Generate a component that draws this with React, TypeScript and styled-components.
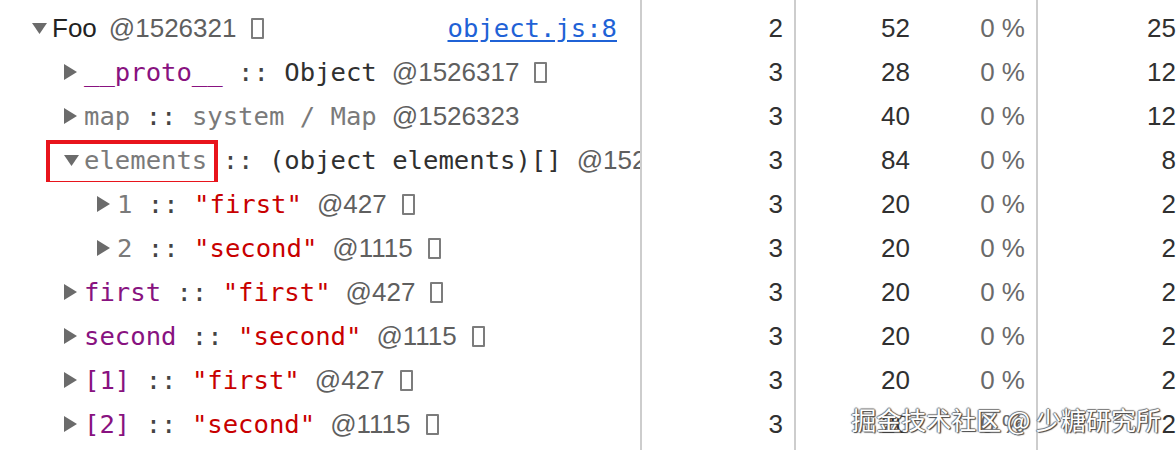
import React from "react";
import styled, { createGlobalStyle } from "styled-components";

const Global = createGlobalStyle`
  html, body { margin: 0; padding: 0; background: #fff; }
  body { width: 1176px; height: 450px; overflow: hidden; }
`;

const Page = styled.div`
  position: relative;
  width: 1176px;
  height: 450px;
  overflow: hidden;
  background: #fff;
`;

const Table = styled.div`
  display: flex;
  flex-direction: column;
  height: 100%;
`;

const Row = styled.div<{ $h?: number; $grow?: boolean }>`
  display: grid;
  grid-template-columns: 640px 154px 242px 140px;
  height: ${(p) => (p.$h !== undefined ? `${p.$h}px` : "44px")};
  flex: ${(p) => (p.$grow ? "1 1 auto" : "none")};
`;

const Cell = styled.div<{ $line?: boolean }>`
  display: flex;
  align-items: center;
  justify-content: flex-end;
  border-left: ${(p) => (p.$line ? "2px solid #cdcdcd" : "none")};
  font-family: "Liberation Sans", Arial, sans-serif;
  font-size: 26px;
  color: #303030;
  overflow: hidden;
  white-space: nowrap;
  box-sizing: border-box;
`;

const NumCell = styled(Cell)`
  padding-right: 11px;
`;

const LastCell = styled(Cell)`
  padding-right: 0;
`;

const TreeCell = styled.div<{ $level: number }>`
  display: flex;
  align-items: center;
  padding-left: ${(p) => (p.$level === 0 ? 32 : 31 + p.$level * 33)}px;
  overflow: hidden;
  white-space: pre;
  font-family: "DejaVu Sans Mono", Menlo, monospace;
  font-size: 25.6px;
  color: #303030;
`;

const Toggle = styled.span`
  display: inline-flex;
  align-items: center;
  flex: none;
  width: 20px;
`;

const Highlight = styled.span`
  position: relative;
  display: inline-flex;
  align-items: center;
  align-self: stretch;
  &::after {
    content: "";
    position: absolute;
    left: -18px;
    right: -11px;
    top: 2px;
    bottom: -3px;
    border: 4px solid #e8141c;
    pointer-events: none;
  }
`;

type Kind = "prop" | "meta" | "text" | "str" | "cls" | "sep";

const colors: Record<Kind, string> = {
  prop: "#881280",
  meta: "#7a7a7a",
  text: "#303030",
  str: "#c80000",
  cls: "#222222",
  sep: "#444444",
};

const Tok = styled.span<{ $k: Kind }>`
  color: ${(p) => colors[p.$k]};
  font-family: ${(p) =>
    p.$k === "cls"
      ? `"Liberation Sans", Arial, sans-serif`
      : `"DejaVu Sans Mono", Menlo, monospace`};
  font-size: ${(p) => (p.$k === "cls" ? "26px" : "inherit")};
`;

const Id = styled.span<{ $gap?: number }>`
  margin-left: ${(p) => (p.$gap !== undefined ? p.$gap : 15)}px;
  font-family: "Liberation Sans", Arial, sans-serif;
  font-size: 26px;
  color: #5f5f5f;
`;

const Tofu = styled.span`
  display: inline-block;
  flex: none;
  margin-left: 15px;
  width: 13px;
  height: 21px;
  box-sizing: border-box;
  border: 2px solid #7c7c7c;
  border-radius: 1px;
`;

const Link = styled.a`
  margin-left: auto;
  padding-right: 23px;
  color: #1f62d6;
  text-decoration: underline;
  text-underline-offset: 3px;
  font-family: "DejaVu Sans Mono", Menlo, monospace;
  cursor: pointer;
`;

const Size = styled.span`
  color: #303030;
`;

const Pct = styled.span`
  min-width: 115px;
  text-align: right;
  color: #6a6a6a;
`;

const Watermark = styled.div`
  position: absolute;
  right: 15px;
  bottom: 13px;
  font-family: "Noto Sans CJK SC", "Liberation Sans", sans-serif;
  font-size: 25px;
  color: #ffffff;
  white-space: pre;
  text-shadow: 1px 1px 1px #444, -1px 0 1px #777, 0 -1px 1px #777, 1px 0 1px #555;
`;

const Arrow: React.FC<{ open?: boolean }> = ({ open }) =>
  open ? (
    <svg width="15" height="11" viewBox="0 0 15 11">
      <polygon points="0,0 15,0 7.5,11" fill="#6b6b6b" />
    </svg>
  ) : (
    <svg width="13" height="16" viewBox="0 0 13 16">
      <polygon points="0,0 13,8 0,16" fill="#6b6b6b" />
    </svg>
  );

type Seg = [Kind, string];

interface RowData {
  level: number;
  open?: boolean;
  name: Seg;
  rest: Seg[];
  id: string;
  idGap?: number;
  tofu?: boolean;
  boxed?: boolean;
  link?: string;
  dist: string;
  size: string;
  ret: string;
}

const SEP: Seg = ["sep", " :: "];

const rows: RowData[] = [
  { level: 0, open: true, name: ["cls", "Foo"], rest: [], id: "@1526321", idGap: 12, tofu: true, link: "object.js:8", dist: "2", size: "52", ret: "25" },
  { level: 1, name: ["prop", "__proto__"], rest: [SEP, ["text", "Object"]], id: "@1526317", tofu: true, dist: "3", size: "28", ret: "12" },
  { level: 1, name: ["meta", "map"], rest: [SEP, ["meta", "system / Map"]], id: "@1526323", dist: "3", size: "40", ret: "12" },
  { level: 1, open: true, boxed: true, name: ["meta", "elements"], rest: [SEP, ["text", "(object elements)[]"]], id: "@1526325", dist: "3", size: "84", ret: "8" },
  { level: 2, name: ["meta", "1"], rest: [SEP, ["str", "\"first\""]], id: "@427", tofu: true, dist: "3", size: "20", ret: "2" },
  { level: 2, name: ["meta", "2"], rest: [SEP, ["str", "\"second\""]], id: "@1115", tofu: true, dist: "3", size: "20", ret: "2" },
  { level: 1, name: ["prop", "first"], rest: [SEP, ["str", "\"first\""]], id: "@427", tofu: true, dist: "3", size: "20", ret: "2" },
  { level: 1, name: ["prop", "second"], rest: [SEP, ["str", "\"second\""]], id: "@1115", tofu: true, dist: "3", size: "20", ret: "2" },
  { level: 1, name: ["prop", "[1]"], rest: [SEP, ["str", "\"first\""]], id: "@427", tofu: true, dist: "3", size: "20", ret: "2" },
  { level: 1, name: ["prop", "[2]"], rest: [SEP, ["str", "\"second\""]], id: "@1115", tofu: true, dist: "3", size: "20", ret: "2" },
];

const EmptyRow: React.FC<{ h?: number; grow?: boolean }> = ({ h, grow }) => (
  <Row $h={h} $grow={grow}>
    <Cell />
    <Cell $line />
    <Cell $line />
    <Cell $line />
  </Row>
);

export default function App() {
  return (
    <Page>
      <Global />
      <Table>
        <EmptyRow h={6} />
        {rows.map((r, i) => {
          const head = (
            <>
              <Toggle>
                <Arrow open={r.open} />
              </Toggle>
              <Tok $k={r.name[0]}>{r.name[1]}</Tok>
            </>
          );
          return (
            <Row key={i}>
              <TreeCell $level={r.level}>
                {r.boxed ? <Highlight>{head}</Highlight> : head}
                {r.rest.map((s, j) => (
                  <Tok key={j} $k={s[0]}>
                    {s[1]}
                  </Tok>
                ))}
                <Id $gap={r.idGap}>{r.id}</Id>
                {r.tofu && <Tofu />}
                {r.link && <Link>{r.link}</Link>}
              </TreeCell>
              <NumCell $line>{r.dist}</NumCell>
              <NumCell $line>
                <Size>{r.size}</Size>
                <Pct>0 %</Pct>
              </NumCell>
              <LastCell $line>{r.ret}</LastCell>
            </Row>
          );
        })}
        <EmptyRow grow />
      </Table>
      <Watermark>掘金技术社区 @ 少糖研究所</Watermark>
    </Page>
  );
}
